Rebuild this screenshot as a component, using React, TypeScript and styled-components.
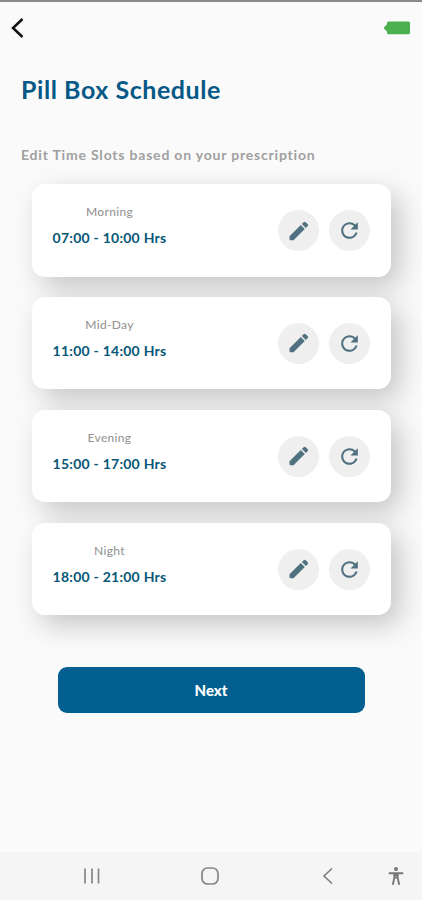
import React from "react";
import styled, { createGlobalStyle } from "styled-components";
import { MdRefresh } from "react-icons/md";

const GlobalStyle = createGlobalStyle`
  *, *::before, *::after { box-sizing: border-box; }
  body { margin: 0; background: #fafafa; }
  button { border: 0; padding: 0; background: none; font: inherit; color: inherit; }
`;

const Screen = styled.div`
  display: flex;
  flex-direction: column;
  height: 900px;
  width: 100%;
  overflow: hidden;
  background: #fafafa;
  border-top: 2px solid #888;
  font-family: Lato, "Liberation Sans", sans-serif;
`;

const AppBar = styled.header`
  display: flex;
  justify-content: space-between;
  align-items: center;
  height: 51px;
  padding: 0 12px 0 10.5px;
  svg { display: block; }
`;

const Title = styled.h1`
  margin: 21px 0 0 21px;
  font-size: 25px;
  line-height: 30px;
  font-weight: 700;
  letter-spacing: 0.55px;
  color: #065886;
  white-space: nowrap;
`;

const Hint = styled.p`
  margin: 41px 0 0 21px;
  font-size: 14px;
  line-height: 20px;
  font-weight: 700;
  letter-spacing: 0.8px;
  color: #a0a0a0;
  white-space: nowrap;
`;

const SlotList = styled.main`
  display: flex;
  flex-direction: column;
  gap: 20.4px;
  margin: 19px 31.5px 0 32px;
`;

const SlotCard = styled.section`
  display: flex;
  justify-content: space-between;
  height: 92.5px;
  padding: 17px 20.5px 0 20px;
  border-radius: 13px;
  background: #fff;
  box-shadow: 9px 10px 28px rgba(0, 0, 0, 0.21);
`;

const SlotText = styled.div`
  display: flex;
  flex-direction: column;
  align-items: center;
  width: 115px;
  white-space: nowrap;
`;

const SlotName = styled.span`
  font-size: 12px;
  line-height: 22px;
  font-weight: 500;
  letter-spacing: 0.3px;
  color: #969696;
`;

const SlotTime = styled.span`
  margin-top: 4px;
  font-size: 14px;
  line-height: 22px;
  font-weight: 700;
  letter-spacing: 0.25px;
  color: #075778;
`;

const Actions = styled.div`
  display: flex;
  gap: 10px;
  padding-top: 9px;
`;

const RoundButton = styled.button`
  display: flex;
  align-items: center;
  justify-content: center;
  width: 41px;
  height: 41px;
  border-radius: 50%;
  background: #efefef;
  color: #50717f;
`;

const NextButton = styled.button`
  align-self: center;
  width: 307px;
  height: 46px;
  margin-top: 51.5px;
  border-radius: 9px;
  && { color: #fff; background: #025f8f; }
  font-size: 15px;
  font-weight: 900;
`;

const NavBar = styled.nav`
  display: grid;
  grid-template-columns: 151px 117px 120px 1fr;
  align-items: center;
  height: 48px;
  margin-top: auto;
  background: #f5f5f5;
  svg { display: block; justify-self: center; }
  svg:first-child { margin-left: 33px; }
  svg:last-child { justify-self: end; margin-right: 20px; }
`;

const slots = [
  { name: "Morning", time: "07:00 - 10:00 Hrs" },
  { name: "Mid-Day", time: "11:00 - 14:00 Hrs" },
  { name: "Evening", time: "15:00 - 17:00 Hrs" },
  { name: "Night", time: "18:00 - 21:00 Hrs" },
];

function PencilIcon() {
  return (
    <svg width="20" height="20" viewBox="0 0 20 20" fill="currentColor">
      <path d="M.5 15.300 11.800 4l4 4L4.500 19.300H1.500Q.5 19.300.5 18.300Z" />
      <path d="m12.900 2.900 1.700-1.700Q15.700.2 16.700 1.200l1.900 1.900q1 1 0 2.100l-1.700 1.700Z" />
    </svg>
  );
}

export default function App() {
  return (
    <>
      <GlobalStyle />
      <Screen>
        <AppBar>
          <button aria-label="Back">
            <svg width="13" height="20" viewBox="0 0 13 20" fill="none" stroke="#111" strokeWidth="2.500">
              <path d="M11.500 1 2 10l9.500 9" />
            </svg>
          </button>
          <svg width="26" height="14" viewBox="0 0 26 14" fill="#4caf50">
            <path d="M4.500 0.500H24.500Q26 .5 26 2V11.800Q26 13.300 24.500 13.300H4.500Q3 13.300 3 11.800V10.500L0 7.600V6.200L3 3.300V2Q3 .5 4.500 .5Z" />
          </svg>
        </AppBar>
        <Title>Pill Box Schedule</Title>
        <Hint>Edit Time Slots based on your prescription</Hint>
        <SlotList>
          {slots.map((s) => (
            <SlotCard key={s.name}>
              <SlotText>
                <SlotName>{s.name}</SlotName>
                <SlotTime>{s.time}</SlotTime>
              </SlotText>
              <Actions>
                <RoundButton aria-label="Edit"><PencilIcon /></RoundButton>
                <RoundButton aria-label="Reset"><MdRefresh size={25} /></RoundButton>
              </Actions>
            </SlotCard>
          ))}
        </SlotList>
        <NextButton>Next</NextButton>
        <NavBar>
          <svg width="18" height="18" viewBox="0 0 18 18" stroke="#858585" strokeWidth="1.700">
            <path d="M2 1.500v15M9 1.500v15M15.500 1.500v15" />
          </svg>
          <svg width="20" height="20" viewBox="0 0 20 20" fill="none" stroke="#858585" strokeWidth="1.700">
            <rect x="2" y="2" width="16" height="16" rx="5.500" />
          </svg>
          <svg width="12" height="18" viewBox="0 0 12 18" fill="none" stroke="#808080" strokeWidth="1.700">
            <path d="M10 1.500 2 9l8 7.500" />
          </svg>
          <svg width="16" height="20" viewBox="0 0 16 20" fill="none" stroke="#777" strokeWidth="1.900">
            <circle cx="8" cy="3" r="2" fill="#777" stroke="none" />
            <path d="M.8 7.200h14.400M6.300 7v5L4.800 18.800M9.700 7v5l1.500 6.800M6 9h4M6 11.500h4" />
          </svg>
        </NavBar>
      </Screen>
    </>
  );
}
